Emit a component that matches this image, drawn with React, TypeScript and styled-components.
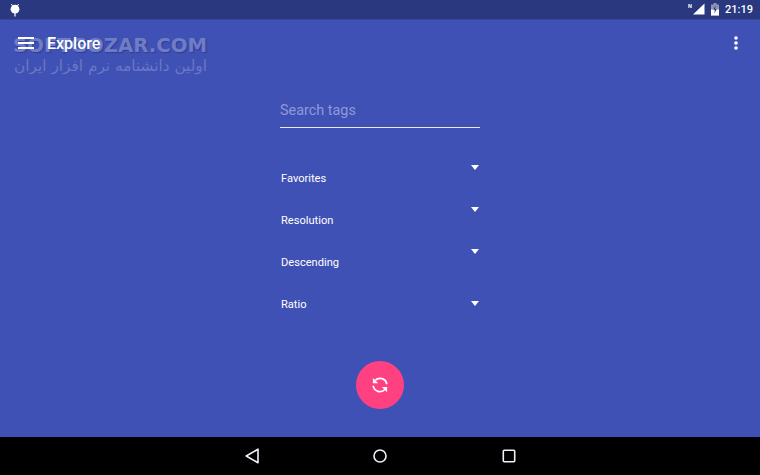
import React from 'react';
import styled, { createGlobalStyle } from 'styled-components';

const GlobalStyle = createGlobalStyle`
  html, body {
    margin: 0;
    padding: 0;
    background: #3f51b5;
    font-family: Roboto, "Liberation Sans", sans-serif;
  }
`;

const filters = [
  { label: 'Favorites', inline: false },
  { label: 'Resolution', inline: false },
  { label: 'Descending', inline: false },
  { label: 'Ratio', inline: true },
];

const App = () => {
  return (
    <Screen>
      <GlobalStyle />
      <StatusBar>
        <svg width="12" height="15" viewBox="0 0 12 15">
          <path d="M2.4 2 L3.6 4 M9.6 2 L8.4 4" stroke="#fff" strokeWidth="1" />
          <circle cx="6" cy="7.2" r="4.4" fill="#fff" />
          <rect x="5.4" y="10.5" width="1.2" height="4" fill="#fff" />
        </svg>
        <StatusRight>
          <svg width="18" height="13" viewBox="0 0 18 13">
            <text x="0" y="5" fontSize="5.5" fontWeight="700" fill="#fff" fontFamily="Roboto">N</text>
            <path d="M16.5 0.5 V11.5 H5 Z" fill="#fff" />
          </svg>
          <svg width="8" height="13" viewBox="0 0 8 13">
            <path d="M2.5 0 H5.5 V1.5 H8 V12.5 H0 V1.5 H2.5 Z" fill="#8d93b4" />
            <path d="M0 6.5 H8 V12.5 H0 Z" fill="#fff" />
            <path d="M4.6 2.5 L2.2 6.8 H3.8 L3.3 10.5 L5.8 6 H4.1 Z" fill="#2a3880" />
          </svg>
          <Clock>21:19</Clock>
        </StatusRight>
      </StatusBar>

      <Main>
        <Toolbar>
          <ToolbarLeft>
            <svg width="16" height="12" viewBox="0 0 16 12">
              <path d="M0 1 H16 M0 6 H16 M0 11 H16" stroke="#fff" strokeWidth="1.8" />
            </svg>
            <Title>Explore</Title>
          </ToolbarLeft>
          <svg width="4" height="14" viewBox="0 0 4 14">
            <circle cx="2" cy="2" r="1.8" fill="#fff" />
            <circle cx="2" cy="7" r="1.8" fill="#fff" />
            <circle cx="2" cy="12" r="1.8" fill="#fff" />
          </svg>
          <Watermark>
            <WatermarkLatin>SOFTGOZAR.COM</WatermarkLatin>
            <WatermarkPersian dir="rtl">اولین دانشنامه نرم افزار ایران</WatermarkPersian>
          </Watermark>
        </Toolbar>

        <Form>
          <SearchField>Search tags</SearchField>
          <FilterList>
            {filters.map((filter) => (
              <FilterRow key={filter.label}>
                <FilterLabel>{filter.label}</FilterLabel>
                <Caret $inline={filter.inline} />
              </FilterRow>
            ))}
          </FilterList>
        </Form>

        <FabWrap>
          <Fab>
            <svg width="18" height="18" viewBox="0 0 24 24" fill="none" stroke="#fff" strokeWidth="2.4">
              <path d="M21 11 A 9 9 0 0 0 5.5 6" />
              <path d="M3 13 A 9 9 0 0 0 18.5 18" />
              <path d="M2.5 2.5 V9.5 H9.5 Z" fill="#fff" stroke="none" />
              <path d="M21.5 21.5 V14.5 H14.5 Z" fill="#fff" stroke="none" />
            </svg>
          </Fab>
        </FabWrap>
      </Main>

      <NavBar>
        <svg width="14" height="16" viewBox="0 0 14 16">
          <path d="M13 1.2 V14.8 L1.2 8 Z" fill="none" stroke="#f1f3fa" strokeWidth="1.6" strokeLinejoin="round" />
        </svg>
        <svg width="14" height="14" viewBox="0 0 14 14">
          <circle cx="7" cy="7" r="6" fill="none" stroke="#f1f3fa" strokeWidth="1.6" />
        </svg>
        <svg width="14" height="14" viewBox="0 0 14 14">
          <rect x="1.3" y="1.3" width="11.4" height="11.4" rx="1" fill="none" stroke="#f1f3fa" strokeWidth="1.6" />
        </svg>
      </NavBar>
    </Screen>
  );
};

export default App;

const Screen = styled.div`
  width: 760px;
  height: 475px;
  display: flex;
  flex-direction: column;
  overflow: hidden;
  background: #3f51b5;
`;

const StatusBar = styled.div`
  height: 19px;
  flex: none;
  display: flex;
  align-items: center;
  justify-content: space-between;
  padding: 0 7px 0 9px;
  background: #2a3880;
  border-bottom: 1px solid #36459c;
`;

const StatusRight = styled.div`
  display: flex;
  align-items: center;
  gap: 5px;
`;

const Clock = styled.span`
  margin-left: 1px;
  color: #fff;
  font-size: 11px;
  font-weight: 500;
`;

const Main = styled.div`
  flex: 1;
  display: flex;
  flex-direction: column;
  align-items: center;
`;

const Toolbar = styled.div`
  position: relative;
  align-self: stretch;
  height: 46px;
  flex: none;
  display: flex;
  align-items: center;
  justify-content: space-between;
  padding: 0 22px 0 18px;
`;

const ToolbarLeft = styled.div`
  position: relative;
  z-index: 1;
  display: flex;
  align-items: center;
  gap: 13px;
`;

const Title = styled.span`
  color: #fff;
  font-size: 16px;
  font-weight: 500;
`;

const Watermark = styled.div`
  position: absolute;
  left: 13px;
  top: 15px;
  width: 194px;
  pointer-events: none;
`;

const WatermarkLatin = styled.div`
  color: #6f7cc6;
  font-family: "DejaVu Sans", sans-serif;
  font-size: 19.7px;
  font-weight: 700;
  line-height: 21px;
  white-space: nowrap;
  text-shadow: 1px 1px 1px rgba(35, 45, 120, 0.55);
`;

const WatermarkPersian = styled.div`
  color: #6a77c4;
  font-family: "DejaVu Sans", sans-serif;
  font-size: 15.3px;
  line-height: 20px;
  white-space: nowrap;
`;

const Form = styled.div`
  width: 200px;
  display: flex;
  flex-direction: column;
`;

const SearchField = styled.div`
  height: 35px;
  margin-top: 27px;
  box-sizing: border-box;
  padding-top: 8px;
  color: #8e99d9;
  font-size: 14.4px;
  line-height: 20px;
  border-bottom: 1.5px solid #e8eaf6;
`;

const FilterList = styled.div`
  display: flex;
  flex-direction: column;
  padding-top: 30px;
`;

const FilterRow = styled.div`
  height: 42px;
  display: flex;
  justify-content: space-between;
  align-items: flex-start;
  padding: 0 1px;
`;

const FilterLabel = styled.span`
  margin-top: 13px;
  color: #fff;
  font-size: 11.1px;
  line-height: 16px;
`;

const Caret = styled.span<{ $inline: boolean }>`
  width: 0;
  height: 0;
  margin-top: ${(p) => (p.$inline ? '17px' : '7px')};
  border-left: 4.5px solid transparent;
  border-right: 4.5px solid transparent;
  border-top: 5px solid #fff;
`;

const FabWrap = styled.div`
  margin-top: auto;
  margin-bottom: 28px;
`;

const Fab = styled.div`
  width: 48px;
  height: 48px;
  border-radius: 50%;
  background: #ff4081;
  display: flex;
  align-items: center;
  justify-content: center;
`;

const NavBar = styled.div`
  height: 38px;
  flex: none;
  background: #000;
  display: flex;
  align-items: center;
  justify-content: center;
  gap: 114.5px;
`;
